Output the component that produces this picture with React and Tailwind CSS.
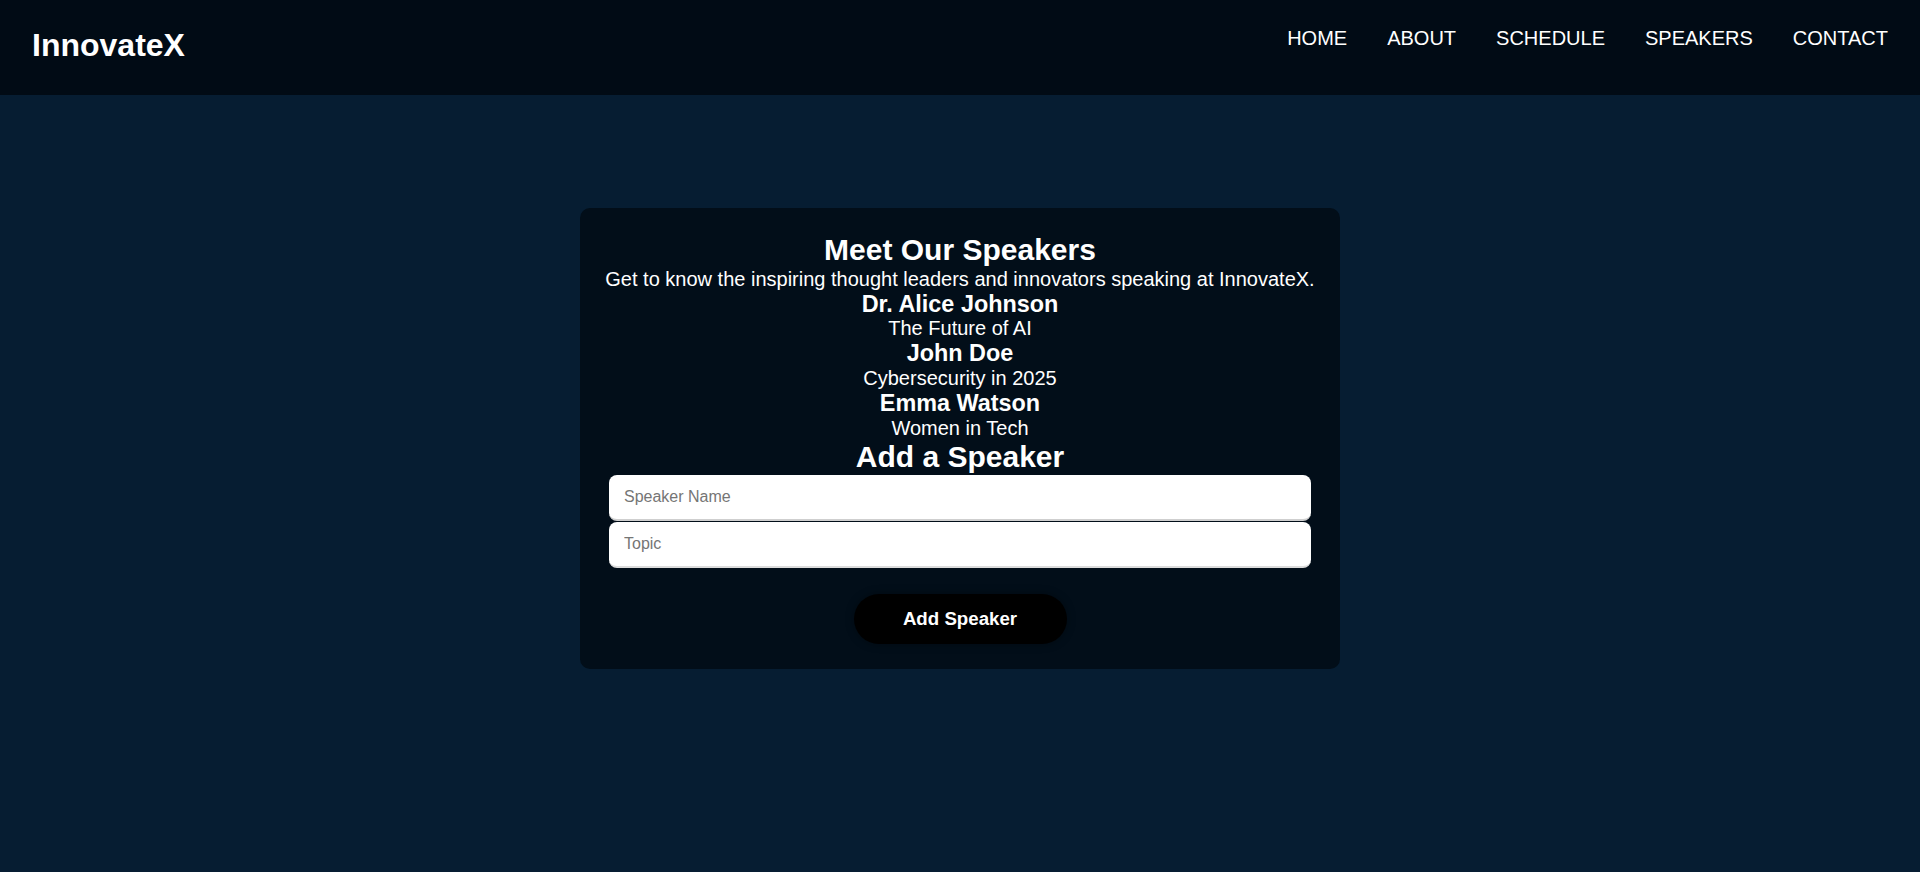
export default function App() {
  const speakers = [
    { name: "Dr. Alice Johnson", topic: "The Future of AI" },
    { name: "John Doe", topic: "Cybersecurity in 2025" },
    { name: "Emma Watson", topic: "Women in Tech" },
  ];
  return (
    <div
      className="min-h-screen bg-[#061d32] text-white"
      style={{ fontFamily: '"Liberation Sans", Arial, sans-serif' }}
    >
      <header className="h-[95px] bg-[#010b15] flex items-start justify-between px-8 pt-[27px]">
        <h1 className="text-[32px] leading-[37px] font-bold">InnovateX</h1>
        <nav>
          <ul className="flex gap-[40px] text-[20px] leading-[23px]">
            <li>HOME</li>
            <li>ABOUT</li>
            <li>SCHEDULE</li>
            <li>SPEAKERS</li>
            <li>CONTACT</li>
          </ul>
        </nav>
      </header>
      <main className="pt-[113px]">
        <section className="w-[760px] mx-auto bg-[#020e19] rounded-[10px] px-5 pt-[25px] pb-[25px] flex flex-col items-center text-center">
          <h2 className="text-[30px] leading-[34.5px] font-bold">Meet Our Speakers</h2>
          <p className="text-[20px] leading-[23px] whitespace-nowrap">
            Get to know the inspiring thought leaders and innovators speaking at InnovateX.
          </p>
          {speakers.map((s) => (
            <div key={s.name} className="flex flex-col items-center">
              <h3 className="text-[23.4px] leading-[26.9px] font-bold">{s.name}</h3>
              <p className="text-[20px] leading-[23px]">{s.topic}</p>
            </div>
          ))}
          <h2 className="text-[30px] leading-[34.5px] font-bold">Add a Speaker</h2>
          <div className="w-[702px] flex flex-col">
            <input
              placeholder="Speaker Name"
              className="h-[46px] bg-white rounded-lg border-b-2 border-[#cfcfcf] pl-[15px] text-[16px] text-black placeholder:text-[#757575] outline-none"
              style={{ fontFamily: '"Liberation Sans", Arial, sans-serif' }}
            />
            <input
              placeholder="Topic"
              className="mt-[1px] h-[46px] bg-white rounded-lg border-b-2 border-[#dcdcdc] pl-[15px] text-[16px] text-black placeholder:text-[#757575] outline-none"
              style={{ fontFamily: '"Liberation Sans", Arial, sans-serif' }}
            />
          </div>
          <button className="mt-[26px] w-[213px] h-[50px] rounded-full bg-black text-white font-bold text-[18.7px] shadow-[0_0_8px_rgba(0,0,0,0.35)]">
            Add Speaker
          </button>
        </section>
      </main>
    </div>
  );
}
